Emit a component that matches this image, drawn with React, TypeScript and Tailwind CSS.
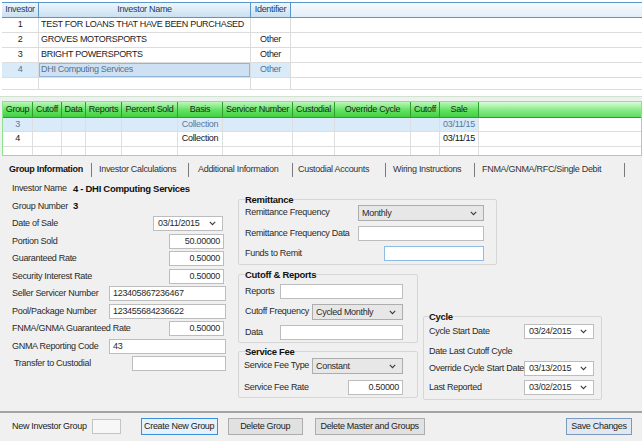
import React from 'react'

// investor master rows
const investors = [
  { id: '1', name: 'TEST FOR LOANS THAT HAVE BEEN PURCHASED', ident: '' },
  { id: '2', name: 'GROVES MOTORSPORTS', ident: 'Other' },
  { id: '3', name: 'BRIGHT POWERSPORTS', ident: 'Other' },
  { id: '4', name: 'DHI Computing Services', ident: 'Other', selected: true },
]

const groupCols = ['Group', 'Cutoff', 'Data', 'Reports', 'Percent Sold', 'Basis', 'Servicer Number', 'Custodial', 'Override Cycle', 'Cutoff', 'Sale']

const groups = [
  { cells: ['3', '', '', '', '', 'Collection', '', '', '', '', '03/11/15'], selected: true },
  { cells: ['4', '', '', '', '', 'Collection', '', '', '', '', '03/11/15'], selected: false },
]

const tabs = [
  { label: 'Group Information', w: 'w-[90px] pr-[7px]', bold: true },
  { label: 'Investor Calculations', w: 'w-[99px] pr-[9px]' },
  { label: 'Additional Information', w: 'w-[100px] pr-[5px]' },
  { label: 'Custodial Accounts', w: 'w-[95px] pr-[7px]' },
  { label: 'Wiring Instructions', w: 'w-[89px] pr-[7px]' },
  { label: 'FNMA/GNMA/RFC/Single Debit', w: 'w-[143px]' },
]

function Chevron() {
  return (
    <svg width="7" height="5" viewBox="0 0 7 5" className="shrink-0">
      <path d="M0.8 0.8L3.5 3.6L6.2 0.8" fill="none" stroke="#3a3a3a" strokeWidth="1.1" />
    </svg>
  )
}

function TextBox({ w, value = '', right = false, focus = false }: { w: string; value?: string; right?: boolean; focus?: boolean }) {
  return (
    <div className={`${w} h-[15px] shrink-0 bg-white border ${focus ? 'border-[#8dbbe6]' : 'border-[#bdbdbd]'} flex items-center px-[3px] ${right ? 'justify-end' : ''}`}>
      <span className="leading-none">{value}</span>
    </div>
  )
}

function Combo({ w, value }: { w: string; value: string }) {
  return (
    <div className={`${w} h-[16px] shrink-0 bg-[#e7e7e7] border border-[#adadad] flex items-center justify-between pl-[3px] pr-[6px]`}>
      <span className="leading-none">{value}</span>
      <Chevron />
    </div>
  )
}

function DateBox({ value }: { value: string }) {
  return (
    <div className="w-[70px] h-[15px] shrink-0 bg-white border border-[#bdbdbd] flex items-center justify-between pl-[4px] pr-[6px]">
      <span className="leading-none">{value}</span>
      <Chevron />
    </div>
  )
}

function Row({ label, children }: { label: string; children?: React.ReactNode }) {
  return (
    <div className="flex items-center justify-between">
      <span>{label}</span>
      {children}
    </div>
  )
}

const legend = 'font-bold text-[9.5px] leading-[11px] text-[#111]'

export default function App() {
  return (
    <div className="w-[642px] h-[441px] overflow-hidden whitespace-nowrap bg-[#f0f0f0] text-[9px] tracking-[-0.3px] text-[#222] font-['Liberation_Sans',Arial,sans-serif]">
      {/* investor grid */}
      <div className="h-[97px] overflow-hidden bg-white border-b border-[#cfe2cf] pt-[2px] pl-[2px]">
        <div className="grid grid-cols-[37px_212px_40px_1fr]">
          {['Investor', 'Investor Name', 'Identifier'].map((h) => (
            <div key={h} className="h-[16px] flex items-center justify-center border-y border-r border-[#5a96c9] bg-linear-to-b from-[#eef6fc] to-[#c9e0f2] text-[#1d3b5c]">
              {h}
            </div>
          ))}
          <div className="h-[16px] border-y border-[#5a96c9] bg-linear-to-b from-[#f6fafd] to-[#e2eef8]" />

          {investors.map((r) => (
            <React.Fragment key={r.id}>
              <div className={`h-[15px] flex items-center justify-center border-r border-b border-[#dcdcdc] ${r.selected ? 'bg-[#d9eaf8] text-[#56728f]' : ''}`}>{r.id}</div>
              <div className={`h-[15px] border-r border-b border-[#dcdcdc] ${r.selected ? 'bg-[#d9eaf8]' : ''}`}>
                {r.selected ? (
                  <div className="h-full bg-[#cde1f2] border border-[#93b6d6] flex items-center pl-[1px] text-[#56728f]">{r.name}</div>
                ) : (
                  <div className="h-full flex items-center pl-[2px]">{r.name}</div>
                )}
              </div>
              <div className={`h-[15px] flex items-center justify-center border-r border-b border-[#dcdcdc] ${r.selected ? 'bg-[#d9eaf8] text-[#56728f]' : ''}`}>{r.ident}</div>
              <div className="h-[15px] border-b border-[#dcdcdc]" />
            </React.Fragment>
          ))}
          <div className="h-[12px] border-r border-b border-[#dcdcdc]" />
          <div className="h-[12px] border-r border-b border-[#dcdcdc]" />
          <div className="h-[12px] border-r border-b border-[#dcdcdc]" />
          <div className="h-[12px] border-b border-[#dcdcdc]" />
        </div>
      </div>

      {/* group grid */}
      <div className="mt-[4px] ml-[2px] h-[55px] overflow-hidden bg-white border border-[#8de38d]">
        <div className="grid grid-cols-[30px_29px_24px_36px_56px_45px_70px_42px_76px_29px_39px_1fr]">
          {groupCols.map((h, i) => (
            <div key={i} className="h-[16px] flex items-center justify-center border-r border-b border-[#2f9f2f] bg-linear-to-b from-[#b9f8b9] via-[#66e466] to-[#3fd03f] text-[#1a2a1a]">
              {h}
            </div>
          ))}
          <div className="h-[16px] border-b border-[#2f9f2f] bg-linear-to-b from-[#d9fbd9] via-[#8cec8c] to-[#5edc5e]" />

          {groups.map((g, gi) => (
            <React.Fragment key={gi}>
              {g.cells.map((c, i) => (
                <div key={i} className={`${gi === 0 ? 'h-[14px]' : 'h-[15px]'} flex items-center justify-center border-r border-b border-[#dedede] ${g.selected ? 'bg-[#d9eaf8] text-[#5a7898]' : 'text-[#111]'}`}>
                  {c}
                </div>
              ))}
              <div className={`${gi === 0 ? 'h-[14px]' : 'h-[15px]'} border-b border-[#dedede]`} />
            </React.Fragment>
          ))}
          {groupCols.map((_, i) => (
            <div key={i} className="h-[10px] border-r border-[#dedede]" />
          ))}
          <div className="h-[10px]" />
        </div>
      </div>

      {/* tabs */}
      <div className="h-[24px] pt-[3px] pl-[9px] flex items-center">
        {tabs.map((t) => (
          <div key={t.label} className={`${t.w} shrink-0 flex items-center`}>
            <span className={t.bold ? 'font-bold text-[#111]' : 'text-[#333]'}>{t.label}</span>
            <span className="ml-auto w-px h-[14px] bg-[#7a7a7a]" />
          </div>
        ))}
      </div>

      {/* group information form */}
      <div className="h-[231px] flex items-start">
        <div className="ml-[12px] w-[214px] flex flex-col text-[#2a2a2a]">
          <div className="h-[17.5px] flex items-center">
            <span className="w-[61px]">Investor Name</span>
            <span className="font-bold text-[9.5px] text-[#111]">4 - DHI Computing Services</span>
          </div>
          <div className="h-[17.5px] flex items-center">
            <span className="w-[61px]">Group Number</span>
            <span className="font-bold text-[9.5px] text-[#111]">3</span>
          </div>
          <div className="h-[17.5px] flex items-center justify-between pr-[3px]">
            <span>Date of Sale</span>
            <DateBox value="03/11/2015" />
          </div>
          <div className="h-[17.5px] flex items-center justify-between pr-[2px]">
            <span>Portion Sold</span>
            <TextBox w="w-[55px]" value="50.00000" right />
          </div>
          <div className="h-[17.5px] flex items-center justify-between pr-[2px]">
            <span>Guaranteed Rate</span>
            <TextBox w="w-[55px]" value="0.50000" right />
          </div>
          <div className="h-[17.5px] flex items-center justify-between pr-[2px]">
            <span>Security Interest Rate</span>
            <TextBox w="w-[55px]" value="0.50000" right />
          </div>
          <div className="h-[17.5px] flex items-center justify-between">
            <span>Seller Servicer Number</span>
            <TextBox w="w-[117px]" value="123405867236467" />
          </div>
          <div className="h-[17.5px] flex items-center justify-between">
            <span>Pool/Package Number</span>
            <TextBox w="w-[117px]" value="123455684236622" />
          </div>
          <div className="h-[17.5px] flex items-center justify-between pr-[2px]">
            <span>FNMA/GNMA Guaranteed Rate</span>
            <TextBox w="w-[55px]" value="0.50000" right />
          </div>
          <div className="h-[17.5px] flex items-center justify-between">
            <span>GNMA Reporting Code</span>
            <TextBox w="w-[117px]" value="43" />
          </div>
          <div className="h-[17.5px] flex items-center justify-between">
            <span className="pl-[2px]">Transfer to Custodial</span>
            <TextBox w="w-[94px]" />
          </div>
        </div>

        <div className="ml-[12px] mt-[14px] flex flex-col text-[#2a2a2a]">
          <fieldset className="w-[259px] border border-[#d6d6d6] rounded-[2px] pl-[6px] pr-[12px] pb-[3px]">
            <legend className={legend}>Remittance</legend>
            <Row label="Remittance Frequency">
              <Combo w="w-[126px]" value="Monthly" />
            </Row>
            <div className="mt-[5px]">
              <Row label="Remittance Frequency Data">
                <TextBox w="w-[126px]" />
              </Row>
            </div>
            <div className="mt-[5px]">
              <Row label="Funds to Remit">
                <TextBox w="w-[100px]" focus />
              </Row>
            </div>
          </fieldset>

          <div className="mt-[4px] flex items-start gap-[5px]">
            <div className="w-[180px] flex flex-col">
              <fieldset className="border border-[#d6d6d6] rounded-[2px] pl-[6px] pr-[14px] pb-[2px]">
                <legend className={legend}>Cutoff &amp; Reports</legend>
                <div className="mt-[4px]">
                  <Row label="Reports">
                    <TextBox w="w-[123px]" />
                  </Row>
                </div>
                <div className="mt-[5px]">
                  <Row label="Cutoff Frequency">
                    <Combo w="w-[91px]" value="Cycled Monthly" />
                  </Row>
                </div>
                <div className="mt-[5px]">
                  <Row label="Data">
                    <TextBox w="w-[123px]" />
                  </Row>
                </div>
              </fieldset>

              <fieldset className="mt-[3px] border border-[#d6d6d6] rounded-[2px] pl-[5px] pr-[14px] pb-[2px]">
                <legend className={`${legend} ml-[1px]`}>Service Fee</legend>
                <div className="mt-[1px]">
                  <Row label="Service Fee Type">
                    <Combo w="w-[91px]" value="Constant" />
                  </Row>
                </div>
                <div className="mt-[6px]">
                  <Row label="Service Fee Rate">
                    <TextBox w="w-[55px]" value="0.50000" right />
                  </Row>
                </div>
              </fieldset>
            </div>

            <fieldset className="mt-[42px] w-[178px] border border-[#d6d6d6] rounded-[2px] pl-[5px] pr-[7px] pb-[4px]">
              <legend className={legend}>Cycle</legend>
              <div className="mt-[2px]">
                <Row label="Cycle Start Date">
                  <DateBox value="03/24/2015" />
                </Row>
              </div>
              <div className="mt-[5px] h-[15px] flex items-center">Date Last Cutoff Cycle</div>
              <div className="mt-[2px]">
                <Row label="Override Cycle Start Date">
                  <DateBox value="03/13/2015" />
                </Row>
              </div>
              <div className="mt-[4px]">
                <Row label="Last Reported">
                  <DateBox value="03/02/2015" />
                </Row>
              </div>
            </fieldset>
          </div>
        </div>
      </div>

      {/* bottom bar */}
      <div className="border-t-2 border-[#a3a3a3] h-[28px] pt-[5px] pl-[12px] pr-[10px] flex items-start text-[#222]">
        <span className="h-[17px] flex items-center">New Investor Group</span>
        <div className="ml-[5px] mt-[1px] w-[29px] h-[15px] bg-[#f7f7f7] border border-[#c4c4c4]" />
        <button className="ml-[20px] w-[77px] h-[17px] bg-[#e5f1fb] border border-[#3c8ed6] leading-none">Create New Group</button>
        <button className="ml-[10px] w-[75px] h-[17px] bg-[#e1e1e1] border border-[#adadad] leading-none">Delete Group</button>
        <button className="ml-[12px] w-[110px] h-[17px] bg-[#e1e1e1] border border-[#adadad] leading-none">Delete Master and Groups</button>
        <button className="ml-auto w-[66px] h-[17px] bg-[#e4e8ee] border border-[#7b9ac0] leading-none">Save Changes</button>
      </div>
    </div>
  )
}
